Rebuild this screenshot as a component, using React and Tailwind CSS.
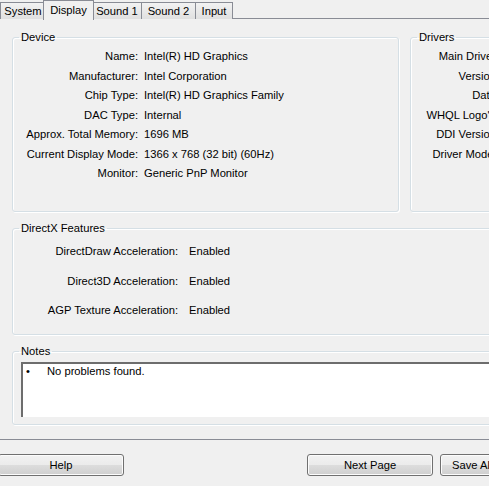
import React from "react";

const font = { fontFamily: '"Liberation Sans", Arial, sans-serif' };

function Tab({ label, active, width }) {
  if (active) {
    return (
      <div
        className={`relative z-10 -mx-[2px] h-[20px] shrink-0 whitespace-nowrap border border-b-0 border-[#898c95] bg-[#f0f0f0] pt-[1px] text-center leading-[16px] text-black ${width}`}>
        {label}
      </div>
    );
  }
  return (
    <div
      className={`mt-[2px] h-[17px] shrink-0 whitespace-nowrap border border-r-0 border-b-0 border-[#898c95] bg-gradient-to-b from-[#f2f2f2] to-[#e0e0e0] text-center leading-[16px] text-black last:border-r ${width}`}>
      {label}
    </div>
  );
}

function Group({ title, className, children }) {
  return (
    <fieldset
      className={`shrink-0 rounded-[3px] border border-[#d5dfe5] shadow-[inset_1px_1px_0_#ffffff,1px_1px_0_#ffffff] ${className}`}>
      <legend className="ml-[6px] px-[2px] leading-[14px] text-black">{title}</legend>
      {children}
    </fieldset>
  );
}

function Row({ label, value, labelW, height }) {
  return (
    <div className={`flex ${height}`}>
      <div className={`shrink-0 whitespace-nowrap text-right ${labelW}`}>{label}</div>
      <div className="whitespace-nowrap">{value}</div>
    </div>
  );
}

function Button({ children, className }) {
  return (
    <button
      className={`h-[22px] shrink-0 whitespace-nowrap rounded-[3px] border border-[#707070] bg-[linear-gradient(#f2f2f2_0%,#ebebeb_50%,#dddddd_50%,#cfcfcf_100%)] text-black shadow-[inset_0_0_0_1px_#fcfcfc] ${className}`}>
      {children}
    </button>
  );
}

export default function App() {
  const device = [
    ["Name:", "Intel(R) HD Graphics"],
    ["Manufacturer:", "Intel Corporation"],
    ["Chip Type:", "Intel(R) HD Graphics Family"],
    ["DAC Type:", "Internal"],
    ["Approx. Total Memory:", "1696 MB"],
    ["Current Display Mode:", "1366 x 768 (32 bit) (60Hz)"],
    ["Monitor:", "Generic PnP Monitor"],
  ];
  const drivers = ["Main Driver:", "Version:", "Date:", "WHQL Logo'd:", "DDI Version:", "Driver Model:"];
  const dx = [
    ["DirectDraw Acceleration:", "Enabled"],
    ["Direct3D Acceleration:", "Enabled"],
    ["AGP Texture Acceleration:", "Enabled"],
  ];

  return (
    <div className="relative h-[486px] w-[489px] overflow-hidden bg-[#f0f0f0] text-[11.2px] text-black" style={font}>
      {/* Tabs */}
      <div className="flex h-[19px] items-start">
        <Tab label="System" width="w-[45px]" />
        <Tab label="Display" active width="w-[51px]" />
        <Tab label="Sound 1" width="w-[49px]" />
        <Tab label="Sound 2" width="w-[54px]" />
        <Tab label="Input" width="w-[38px]" />
      </div>

      {/* Tab panel */}
      <div className="-mt-[1px] h-[422px] w-[500px] border-t border-b border-[#898c95] bg-[#f0f0f0] pl-[12px]">
        <div className="mt-[11px] flex gap-[11px]">
          <Group title="Device" className="h-[182px] w-[387px]">
            <div className="pt-[3px] leading-[19.5px]">
              {device.map(([l, v]) => (
                <Row key={l} label={l} value={v} labelW="w-[131px] pr-[6px]" height="h-[19.5px]" />
              ))}
            </div>
          </Group>
          <Group title="Drivers" className="h-[182px] w-[120px]">
            <div className="pt-[3px] leading-[19.5px]">
              {drivers.map((l) => (
                <div key={l} className="h-[19.5px] w-[88px] whitespace-nowrap text-right">
                  {l}
                </div>
              ))}
            </div>
          </Group>
        </div>

        <Group title="DirectX Features" className="mt-[9px] h-[114px] w-[490px]">
          <div className="pt-[2px] leading-[29.5px]">
            {dx.map(([l, v]) => (
              <Row key={l} label={l} value={v} labelW="w-[176px] pr-[11px]" height="h-[29.5px]" />
            ))}
          </div>
        </Group>

        <Group title="Notes" className="mt-[9px] h-[81px] w-[490px]">
          <div className="ml-[8px] mt-[4px] flex h-[55px] border-t-2 border-l-2 border-t-[#6d6d6d] border-l-[#6d6d6d] bg-white">
            <span className="w-[24px] pl-[3px] leading-[14px]">•</span>
            <span className="leading-[14px]">No problems found.</span>
          </div>
        </Group>
      </div>

      {/* Buttons */}
      <div className="mt-[14px] flex">
        <Button className="-ml-[2px] w-[126px]">Help</Button>
        <Button className="ml-[183px] w-[126px]">Next Page</Button>
        <Button className="ml-[7px] w-[126px] pl-[11px] text-left">Save All Information</Button>
      </div>
    </div>
  );
}
